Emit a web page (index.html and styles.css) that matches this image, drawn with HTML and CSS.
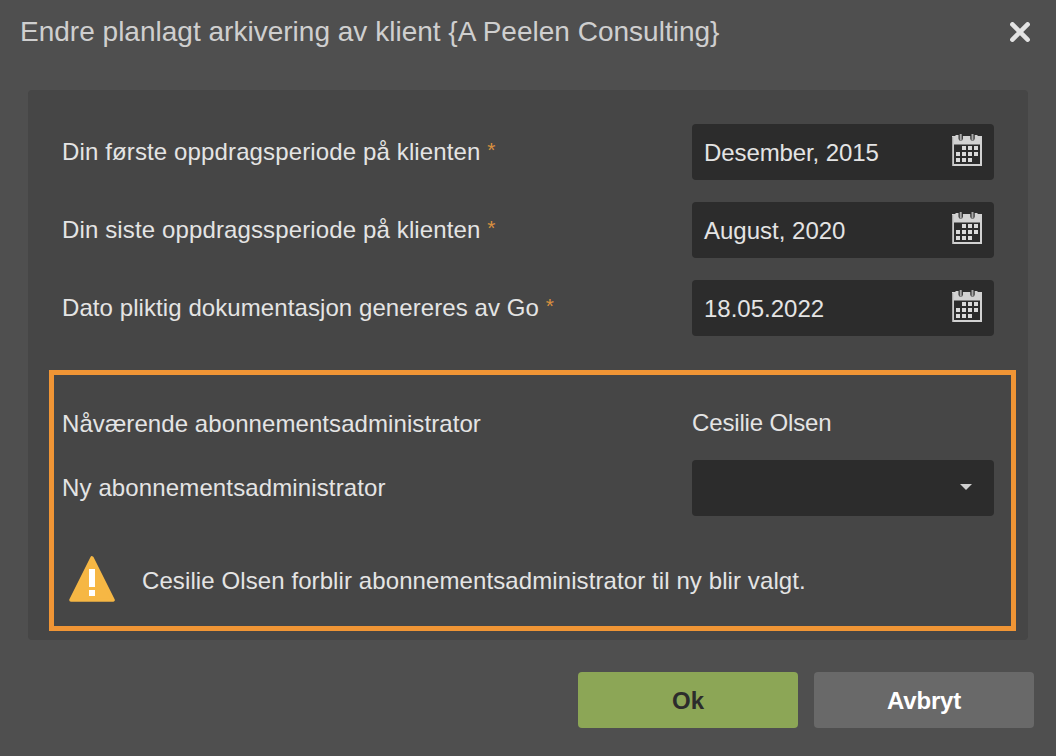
FILE: index.html
```
<!DOCTYPE html>
<html lang="no">
<head>
  <meta charset="UTF-8">
  <meta name="viewport" content="width=device-width, initial-scale=1.0">
  <title>Endre planlagt arkivering</title>
  <link rel="stylesheet" href="styles.css">
</head>
<body>
    <svg class="sprite" width="0" height="0">
        <symbol id="calendar" viewBox="0 0 32 34">
            <path fill="#d2d2d2" fill-rule="evenodd" d="M1 3H4L5 2H7.500V5.500a2.200 2.200 0 0 0 4.400 0V3H19.300V5.500a2.200 2.200 0 0 0 4.400 0V2H26L27 3H31V33H1ZM3 11.500V31H29V11.500Z"/>
            <path fill="#a8a8a8" d="M8.700 1h2v6.500h-2zM20.500 1h2v6.500h-2zM1 4h1.200v29H1z"/>
            <path fill="#dadada" d="M11 13h4v4h-4zM17 13h4v4h-4zM23 13h4v4h-4zM5 19h4v4H5zM11 19h4v4h-4zM17 19h4v4h-4zM23 19h4v4h-4zM5 25h4v4H5zM11 25h4v4h-4zM17 25h4v4h-4z"/>
        </symbol>
    </svg>

    <div class="dialog">
        <div class="dialog-header">
            <h1>Endre planlagt arkivering av klient {A Peelen Consulting}</h1>
            <button class="close-button" aria-label="Lukk">
                <svg width="20" height="20" viewBox="0 0 20 20"><path d="M2.400 2.400L17.600 17.600M17.600 2.400L2.400 17.600" stroke="#e2e2e2" stroke-width="4.600" stroke-linecap="round"/></svg>
            </button>
        </div>

        <div class="panel">
            <div class="row">
                <label class="period-label">Din første oppdragsperiode på klienten <span class="required">*</span></label>
                <div class="field"><span class="month">Desember, 2015</span><svg class="calendar"><use href="#calendar"/></svg></div>
            </div>
            <div class="row">
                <label class="period-label">Din siste oppdragssperiode på klienten <span class="required">*</span></label>
                <div class="field"><span>August, 2020</span><svg class="calendar"><use href="#calendar"/></svg></div>
            </div>
            <div class="row">
                <label>Dato pliktig dokumentasjon genereres av Go <span class="required">*</span></label>
                <div class="field"><span>18.05.2022</span><svg class="calendar"><use href="#calendar"/></svg></div>
            </div>

            <div class="highlight">
                <div class="row admin-row">
                    <label>Nåværende abonnementsadministrator</label>
                    <div class="value">Cesilie Olsen</div>
                </div>
                <div class="row">
                    <label class="period-label">Ny abonnementsadministrator</label>
                    <div class="field select">
                        <svg width="12" height="6" viewBox="0 0 12 6"><path d="M0 0h12L6 6z" fill="#d0d0d0"/></svg>
                    </div>
                </div>
                <div class="warning">
                    <svg width="46" height="46" viewBox="0 0 46 46">
                        <path d="M23 2L44 44H2z" fill="#f6b744" stroke="#f6b744" stroke-width="3.600" stroke-linejoin="round"/>
                        <path d="M20 13h6v18h-6zM20 34h6v6h-6z" fill="#fff"/>
                    </svg>
                    <span>Cesilie Olsen forblir abonnementsadministrator til ny blir valgt.</span>
                </div>
            </div>
        </div>

        <div class="button-group">
            <button class="ok-button">Ok</button>
            <button class="cancel-button">Avbryt</button>
        </div>
    </div>
</body>
</html>
```

FILE: styles.css
```
* {
    box-sizing: border-box;
}
body {
    margin: 0;
    background-color: #4f4f4f;
    color: #e4e4e4;
    font-family: "Liberation Sans", Arial, sans-serif;
    font-size: 24px;
    line-height: 28px;
}
.sprite {
    display: block;
}
.dialog {
    height: 756px;
}
.dialog-header {
    display: flex;
    justify-content: space-between;
    align-items: center;
    height: 90px;
    padding: 0 26px 26px 20px;
}
h1 {
    margin: 0;
    color: #cfcfcf;
    font-size: 28px;
    font-weight: normal;
    line-height: 34px;
    letter-spacing: 0.01px;
    white-space: nowrap;
}
button {
    border: none;
    font-family: inherit;
    cursor: pointer;
}
.close-button {
    display: flex;
    padding: 0;
    background: none;
}
.panel {
    height: 550px;
    margin: 0 28px;
    padding: 34px;
    background: #464646;
    border-radius: 4px;
}
.row {
    display: flex;
    justify-content: space-between;
    align-items: center;
    height: 56px;
    margin-bottom: 22px;
    white-space: nowrap;
}
label {
    letter-spacing: 0.08px;
}
.period-label {
    letter-spacing: 0.13px;
}
.required {
    color: #d9903f;
    font-size: 21px;
    line-height: 0;
    vertical-align: 3px;
}
.field {
    display: flex;
    justify-content: space-between;
    align-items: center;
    width: 302px;
    height: 56px;
    padding: 2px 11px 0 12px;
    background: #2c2c2c;
    border-radius: 4px;
}
.month {
    letter-spacing: -0.1px;
}
.calendar {
    width: 32px;
    height: 34px;
    margin-bottom: 6px;
}
.highlight {
    height: 261px;
    margin: 34px -22px 0 -13px;
    padding: 34px 17px 0 8px;
    border: 5px solid #f09535;
}
.highlight .row {
    margin-bottom: 0;
}
.highlight .admin-row {
    height: 28px;
    margin-bottom: 23px;
}
.admin-row label {
    padding-top: 2px;
}
.value {
    width: 302px;
    letter-spacing: -0.15px;
}
.select {
    justify-content: flex-end;
    padding: 0 22px 2px 0;
}
.warning {
    display: flex;
    align-items: center;
    gap: 27px;
    margin: 40px 0 0 7px;
    letter-spacing: 0.095px;
    white-space: nowrap;
}
.warning span {
    padding-top: 4px;
}
.button-group {
    display: flex;
    justify-content: flex-end;
    gap: 16px;
    padding: 32px 22px 0 0;
}
.button-group button {
    width: 220px;
    height: 56px;
    padding: 2px 0 0;
    border-radius: 4px;
    font-size: 24px;
    font-weight: bold;
}
.ok-button {
    background: #8ca656;
    color: #2c2c2c;
}
.button-group .cancel-button {
    background: #696969;
    color: #fff;
    letter-spacing: -0.2px;
}
```
